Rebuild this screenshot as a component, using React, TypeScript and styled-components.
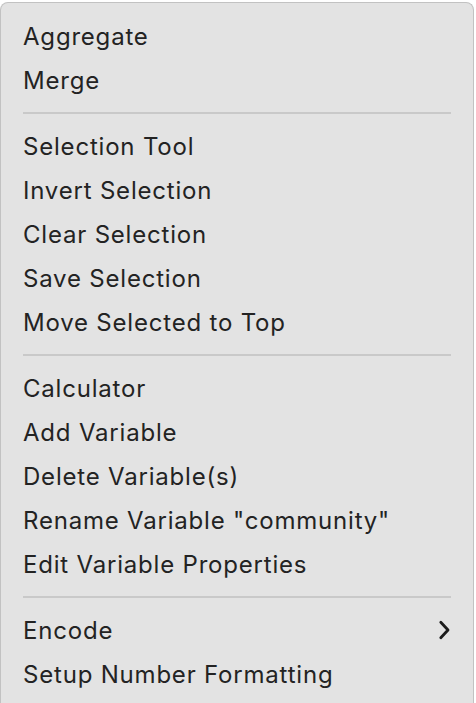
import * as React from 'react';
import styled, { createGlobalStyle } from 'styled-components';

const GlobalStyle = createGlobalStyle`
  html, body {
    margin: 0;
    padding: 0;
    background: #ffffff;
  }
`;

type Entry = { label: string; submenu?: boolean } | 'sep';

const entries: Entry[] = [
  { label: 'Aggregate' },
  { label: 'Merge' },
  'sep',
  { label: 'Selection Tool' },
  { label: 'Invert Selection' },
  { label: 'Clear Selection' },
  { label: 'Save Selection' },
  { label: 'Move Selected to Top' },
  'sep',
  { label: 'Calculator' },
  { label: 'Add Variable' },
  { label: 'Delete Variable(s)' },
  { label: 'Rename Variable "community"' },
  { label: 'Edit Variable Properties' },
  'sep',
  { label: 'Encode', submenu: true },
  { label: 'Setup Number Formatting' },
];

const Chevron = () => (
  <svg width="14" height="20" viewBox="0 0 14 20">
    <path
      d="M3.8 2.2 L11 10 L3.8 17.8"
      fill="none"
      stroke="#1c1c1c"
      strokeWidth="2.8"
      strokeLinecap="round"
      strokeLinejoin="round"
    />
  </svg>
);

const App: React.FC = () => (
  <>
    <GlobalStyle />
    <Menu>
      {entries.map((e, i) =>
        e === 'sep' ? (
          <Separator key={i} />
        ) : (
          <Item key={i}>
            <Label>{e.label}</Label>
            {e.submenu && <Chevron />}
          </Item>
        )
      )}
    </Menu>
  </>
);

const Menu = styled.div`
  margin-top: 2px;
  width: 474px;
  height: 720px;
  box-sizing: border-box;
  padding: 11px 0 0;
  background: #e3e3e3;
  border: 1px solid #c2c2c2;
  border-bottom: none;
  border-radius: 8px 8px 0 0;
  display: flex;
  flex-direction: column;
`;

const Item = styled.div`
  height: 44px;
  display: flex;
  align-items: center;
  justify-content: space-between;
  padding: 0 22px 0 22px;
`;

const Label = styled.span`
  font-family: Inter, 'Noto Sans', sans-serif;
  font-size: 24px;
  color: #232323;
  letter-spacing: 0.8px;
`;

const Separator = styled.div`
  height: 2px;
  margin: 10px 22px 10px 22px;
  background: #c9c9c9;
`;

export default App;
